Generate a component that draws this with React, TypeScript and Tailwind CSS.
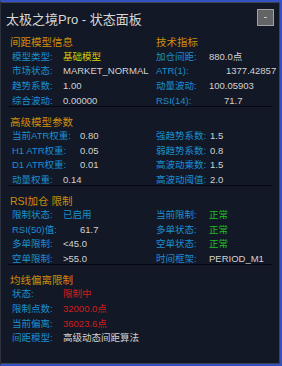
type Row = {
  label: string;
  value: string;
  labelW: string;
  valueColor?: string;
};

type Section = {
  title: string;
  rightTitle?: string;
  left: Row[];
  right?: Row[];
  divider: boolean;
};

const sections: Section[] = [
  {
    title: "间距模型信息",
    rightTitle: "技术指标",
    left: [
      { label: "模型类型:", value: "基础模型", labelW: "w-[51px]", valueColor: "text-[#d6d400]" },
      { label: "市场状态:", value: "MARKET_NORMAL", labelW: "w-[51px]" },
      { label: "趋势系数:", value: "1.00", labelW: "w-[51px]" },
      { label: "综合波动:", value: "0.00000", labelW: "w-[51px]" },
    ],
    right: [
      { label: "加仓间距:", value: "880.0点", labelW: "w-[53px]" },
      { label: "ATR(1):", value: "1377.42857", labelW: "w-[70px]" },
      { label: "动量波动:", value: "100.05903", labelW: "w-[53px]" },
      { label: "RSI(14):", value: "71.7", labelW: "w-[68px]" },
    ],
    divider: true,
  },
  {
    title: "高级模型参数",
    left: [
      { label: "当前ATR权重:", value: "0.80", labelW: "w-[68px]" },
      { label: "H1 ATR权重:", value: "0.05", labelW: "w-[68px]" },
      { label: "D1 ATR权重:", value: "0.01", labelW: "w-[68px]" },
      { label: "动量权重:", value: "0.14", labelW: "w-[51px]" },
    ],
    right: [
      { label: "强趋势系数:", value: "1.5", labelW: "w-[54px]" },
      { label: "弱趋势系数:", value: "0.8", labelW: "w-[54px]" },
      { label: "高波动乘数:", value: "1.5", labelW: "w-[54px]" },
      { label: "高波动阈值:", value: "2.0", labelW: "w-[54px]" },
    ],
    divider: true,
  },
  {
    title: "RSI加仓 限制",
    left: [
      { label: "限制状态:", value: "已启用", labelW: "w-[51px]", valueColor: "text-[#1b8fd0]" },
      { label: "RSI(50)值:", value: "61.7", labelW: "w-[68px]" },
      { label: "多单限制:", value: "<45.0", labelW: "w-[51px]" },
      { label: "空单限制:", value: ">55.0", labelW: "w-[51px]" },
    ],
    right: [
      { label: "当前限制:", value: "正常", labelW: "w-[53px]", valueColor: "text-[#1fc01f]" },
      { label: "多单状态:", value: "正常", labelW: "w-[53px]", valueColor: "text-[#1fc01f]" },
      { label: "空单状态:", value: "正常", labelW: "w-[53px]", valueColor: "text-[#1fc01f]" },
      { label: "时间框架:", value: "PERIOD_M1", labelW: "w-[53px]" },
    ],
    divider: true,
  },
  {
    title: "均线偏离限制",
    left: [
      { label: "状态:", value: "限制中", labelW: "w-[51px]", valueColor: "text-[#d41c1c]" },
      { label: "限制点数:", value: "32000.0点", labelW: "w-[51px]", valueColor: "text-[#d41c1c]" },
      { label: "当前偏离:", value: "36023.6点", labelW: "w-[51px]", valueColor: "text-[#d41c1c]" },
      { label: "间距模型:", value: "高级动态间距算法", labelW: "w-[51px]" },
    ],
    divider: false,
  },
];

function Cell({ row }: { row: Row }) {
  return (
    <div className="flex h-[14.7px] items-center whitespace-nowrap">
      <span className={`${row.labelW} shrink-0 text-[#1b8fd0]`}>{row.label}</span>
      <span className={row.valueColor ?? "text-[#d2d2d2]"}>{row.value}</span>
    </div>
  );
}

function Block({ s }: { s: Section }) {
  return (
    <div className="flex flex-col">
      <div className="flex h-[13px] items-center text-[10.5px] text-[#d08c0c]">
        <span className="w-[155px] shrink-0 pl-[9px]">{s.title}</span>
        {s.rightTitle && <span>{s.rightTitle}</span>}
      </div>
      <div className="flex text-[9.5px]">
        <div className="w-[155px] shrink-0 pl-[11px]">
          {s.left.map((r) => (
            <Cell key={r.label} row={r} />
          ))}
        </div>
        {s.right && (
          <div className="flex-1">
            {s.right.map((r) => (
              <Cell key={r.label} row={r} />
            ))}
          </div>
        )}
      </div>
      {s.divider && (
        <div className="mx-[7px] -mt-[2px] mb-[8.5px] h-px bg-[#050810]" />
      )}
    </div>
  );
}

export default function App() {
  return (
    <div
      className="h-[366px] w-[282px] border-y-2 border-r-2 border-l border-y-[#3451c4] border-r-[#3451c4] border-l-[#2c313b] bg-[#121826] leading-none"
      style={{ fontFamily: '"Liberation Sans", "Noto Sans CJK SC", sans-serif' }}
    >
      <div className="flex h-full flex-col border-r border-b border-t border-[#3d4350]">
        <div className="flex items-start justify-between pt-[6px] pl-[5px] pr-[5px]">
          <span className="mt-[4px] text-[13px] text-[#d6d6d6]">太极之境Pro - 状态面板</span>
          <div className="flex h-[17px] w-[17px] items-center justify-center border border-[#a2a2a2] bg-[#626466]">
            <span className="h-px w-[3px] bg-[#b8c4d0]" />
          </div>
        </div>
        <div className="mt-[10px] flex flex-col">
          {sections.map((s) => (
            <Block key={s.title} s={s} />
          ))}
        </div>
      </div>
    </div>
  );
}
